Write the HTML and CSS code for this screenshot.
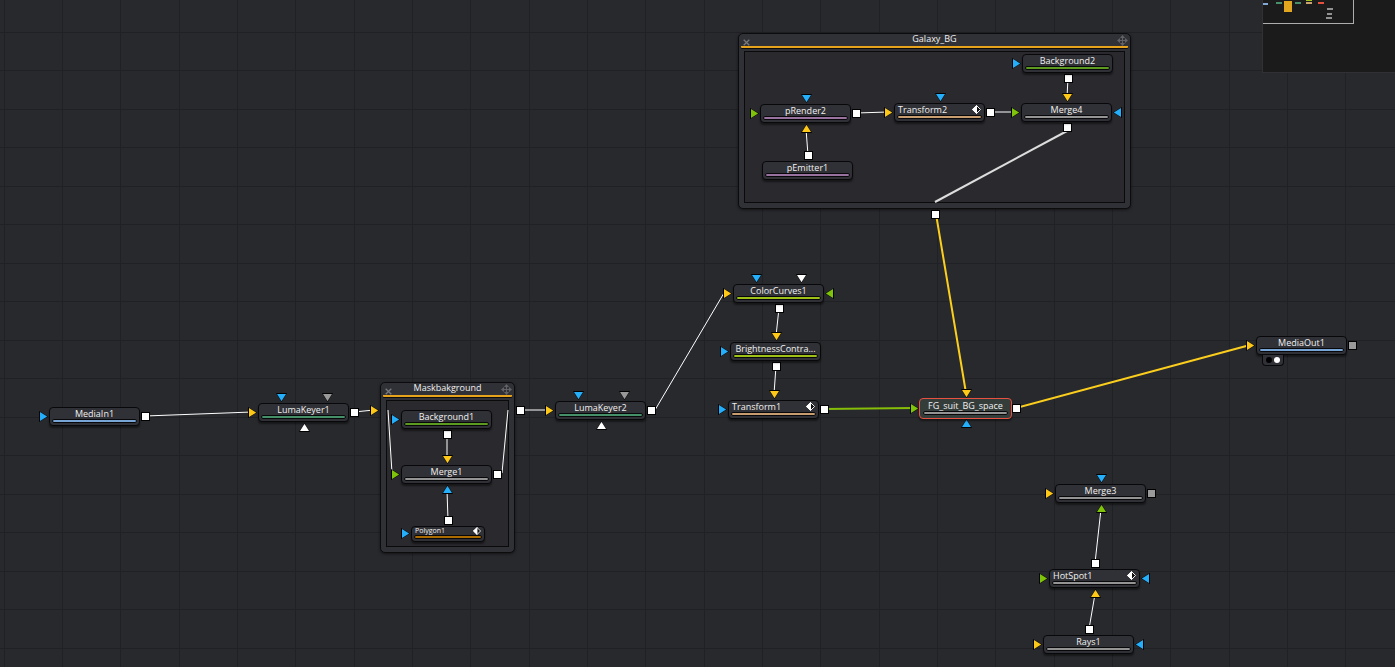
FILE: index.html
```html
<!DOCTYPE html>
<html lang="en">
<head>
<meta charset="utf-8">
<title>Node editor</title>
<link rel="stylesheet" href="styles.css">
</head>
<body>
<main class="canvas">
  <svg class="layer" aria-hidden="true">
    <defs>
      <pattern id="grid" width="175" height="77" patternUnits="userSpaceOnUse">
        <path class="grid-line" d="M4 0h1v77h-1zM62 0h1v77h-1zM120 0h1v77h-1zM0 32h175v1H0zM0 70h175v1H0z"/>
      </pattern>
      <symbol id="out" width="9" height="9" viewBox="0 0 9 9"><rect width="9" height="9" fill="#000"/><rect x="1" y="1" width="7" height="7" fill="currentColor"/></symbol>
      <symbol id="right" width="9" height="11" viewBox="0 0 9 11"><path d="M0 0L9 5.5L0 11Z" fill="#000"/><path d="M1 1L8.200 5.500L1 10Z" fill="currentColor"/></symbol>
      <symbol id="left" width="9" height="11" viewBox="0 0 9 11"><path d="M9 0L0 5.5L9 11Z" fill="#000"/><path d="M8 1L.8 5.500L8 10Z" fill="currentColor"/></symbol>
      <symbol id="down" width="11" height="9" viewBox="0 0 11 9"><path d="M0 0L5.5 9L11 0Z" fill="#000"/><path d="M1 1L5.500 8.200L10 1Z" fill="currentColor"/></symbol>
      <symbol id="up" width="11" height="9" viewBox="0 0 11 9"><path d="M0 9L5.5 0L11 9Z" fill="#000"/><path d="M1 8L5.500 .8L10 8Z" fill="currentColor"/></symbol>
      <symbol id="key" viewBox="0 0 9 9"><path d="M4.500 .5L8.500 4.500L4.500 8.500L.5 4.500Z" fill="#111" stroke="#eee"/><path d="M5 0L0 4.500L5 9Z" fill="#fff"/></symbol>
      <symbol id="close" viewBox="0 0 7 7"><path d="M.7 .7L6.300 6.300M6.300 .7L.7 6.300" fill="none" stroke="#7a7a7c" stroke-width="1.300"/></symbol>
      <symbol id="move" viewBox="0 0 11 11"><path d="M5 1h1v9H5zM1 5h9v1H1z" fill="#626266"/><path d="M5.500 0L8 3H3ZM5.500 11L3 8H8ZM0 5.500L3 3V8ZM11 5.500L8 8V3Z" fill="#626266"/></symbol>
    </defs>
    <rect width="100%" height="100%" fill="url(#grid)"/>
  </svg>

  <section class="group galaxy">
    <header class="group-head">
      <button class="tool" aria-label="Close Galaxy_BG"><svg class="close"><use href="#close"/></svg></button>
      <h2 class="group-name">Galaxy_BG</h2>
      <button class="tool" aria-label="Move Galaxy_BG"><svg class="move"><use href="#move"/></svg></button>
    </header>
    <div class="group-body"></div>
  </section>
  <section class="group mask">
    <header class="group-head">
      <button class="tool" aria-label="Close Maskbakground"><svg class="close"><use href="#close"/></svg></button>
      <h2 class="group-name">Maskbakground</h2>
      <button class="tool" aria-label="Move Maskbakground"><svg class="move"><use href="#move"/></svg></button>
    </header>
    <div class="group-body"></div>
  </section>

  <svg class="layer" aria-hidden="true">
    <g class="wire">
      <path d="M145 416L252 412M354 412L374 410M388 410L392 473M447 434V459M448 520L447 490M502 473L508 410M520 410H549M655 410L724 293M779 308L776 336M776 366L774 394M856 113L888 112M808 155L806 129M990 112H1015M1068 78L1067 97M1095 563L1101 509M1089 629L1095 594"/>
      <path class="wire-wide" d="M1067 131L935 202"/>
    </g>
    <path class="wire-green" d="M824 409L914 408"/>
    <path class="wire-gold" d="M936 214L966 393M1016 408L1250 345"/>
    <g class="white">
      <use href="#out" x="141" y="412"/><use href="#out" x="350" y="408"/><use href="#out" x="647" y="406"/>
      <use href="#out" x="516" y="406"/><use href="#out" x="443" y="430"/><use href="#out" x="493" y="470"/>
      <use href="#out" x="444" y="516"/><use href="#out" x="775" y="304"/><use href="#out" x="772" y="362"/>
      <use href="#out" x="820" y="405"/><use href="#out" x="1012" y="404"/><use href="#out" x="1091" y="559"/>
      <use href="#out" x="1085" y="625"/><use href="#out" x="852" y="109"/><use href="#out" x="804" y="151"/>
      <use href="#out" x="986" y="108"/><use href="#out" x="1064" y="74"/><use href="#out" x="1063" y="123"/>
      <use href="#out" x="931" y="210"/>
      <use href="#down" x="796" y="274"/><use href="#up" x="299" y="423"/><use href="#up" x="596" y="421"/>
    </g>
    <g class="gray">
      <use href="#out" x="1348" y="341"/><use href="#out" x="1147" y="489"/>
      <use href="#down" x="322" y="393"/><use href="#down" x="619" y="391"/>
    </g>
    <g class="blue">
      <use href="#right" x="39" y="411"/><use href="#right" x="391" y="414"/><use href="#right" x="401" y="528"/>
      <use href="#right" x="720" y="346"/><use href="#right" x="718" y="404"/><use href="#right" x="1012" y="58"/>
      <use href="#left" x="1141" y="573"/><use href="#left" x="1135" y="639"/><use href="#left" x="1113" y="107"/>
      <use href="#down" x="801" y="94"/><use href="#down" x="935" y="93"/><use href="#down" x="276" y="393"/>
      <use href="#down" x="573" y="391"/><use href="#down" x="751" y="274"/><use href="#down" x="1096" y="474"/>
      <use href="#up" x="442" y="485"/><use href="#up" x="961" y="419"/>
    </g>
    <g class="gold">
      <use href="#right" x="248" y="407"/><use href="#right" x="370" y="405"/><use href="#right" x="545" y="405"/>
      <use href="#right" x="723" y="288"/><use href="#right" x="1246" y="340"/><use href="#right" x="1045" y="488"/>
      <use href="#right" x="1033" y="639"/><use href="#right" x="884" y="107"/>
      <use href="#down" x="1062" y="93"/><use href="#down" x="442" y="455"/><use href="#down" x="771" y="332"/>
      <use href="#down" x="769" y="390"/><use href="#down" x="961" y="389"/>
      <use href="#up" x="1090" y="589"/><use href="#up" x="801" y="124"/>
    </g>
    <g class="green">
      <use href="#right" x="391" y="469"/><use href="#right" x="910" y="403"/><use href="#right" x="1039" y="573"/>
      <use href="#right" x="750" y="108"/><use href="#right" x="1011" y="107"/>
      <use href="#left" x="825" y="288"/><use href="#up" x="1096" y="504"/>
    </g>
  </svg>

  <article class="node media-in"><div class="name">MediaIn1</div><div class="bar bar-blue"></div></article>
  <article class="node luma-1"><div class="name">LumaKeyer1</div><div class="bar bar-teal"></div></article>
  <article class="node background-1"><div class="name">Background1</div><div class="bar bar-green"></div></article>
  <article class="node merge-1"><div class="name">Merge1</div><div class="bar bar-gray"></div></article>
  <article class="node small polygon-1"><div class="name keyed"><span>Polygon1</span><svg class="key"><use href="#key"/></svg></div><div class="bar bar-brown"></div></article>
  <article class="node luma-2"><div class="name">LumaKeyer2</div><div class="bar bar-teal"></div></article>
  <article class="node curves-1"><div class="name">ColorCurves1</div><div class="bar bar-lime"></div></article>
  <article class="node brightness-1"><div class="name">BrightnessContra...</div><div class="bar bar-lime"></div></article>
  <article class="node transform-1"><div class="name keyed"><span>Transform1</span><svg class="key"><use href="#key"/></svg></div><div class="bar bar-tan"></div></article>
  <article class="node selected fg-suit"><div class="name">FG_suit_BG_space</div><div class="bar bar-gray"></div></article>
  <article class="node media-out"><div class="name">MediaOut1</div><div class="bar bar-blue"></div></article>
  <div class="views"><button class="view" aria-label="Left viewer"></button><button class="view view-on" aria-label="Right viewer"></button></div>
  <article class="node merge-3"><div class="name">Merge3</div><div class="bar bar-gray"></div></article>
  <article class="node hotspot-1"><div class="name keyed"><span>HotSpot1</span><svg class="key"><use href="#key"/></svg></div><div class="bar bar-gray"></div></article>
  <article class="node rays-1"><div class="name">Rays1</div><div class="bar bar-gray"></div></article>
  <article class="node render-2"><div class="name">pRender2</div><div class="bar bar-purple"></div></article>
  <article class="node emitter-1"><div class="name">pEmitter1</div><div class="bar bar-purple"></div></article>
  <article class="node transform-2"><div class="name keyed"><span>Transform2</span><svg class="key"><use href="#key"/></svg></div><div class="bar bar-tan"></div></article>
  <article class="node merge-4"><div class="name">Merge4</div><div class="bar bar-gray"></div></article>
  <article class="node background-2"><div class="name">Background2</div><div class="bar bar-green"></div></article>

  <aside class="minimap" aria-label="Navigator">
    <svg class="map" aria-hidden="true">
      <path fill="#7fa9d3" d="M0 3h5v2H0z"/>
      <path fill="#47906a" d="M13 2h6v2h-6zM32 2h6v2h-6z"/>
      <path fill="#e2a61f" d="M21 1h8v11h-8z"/>
      <path fill="#9cc41a" d="M43 0h6v1h-6z"/>
      <path fill="#caa36f" d="M43 2h6v2h-6z"/>
      <path fill="#e5503c" d="M55 2h6v2h-6z"/>
      <path fill="#929292" d="M64 8h6v2h-6zM64 13h5v2h-5zM63 17h6v2h-6z"/>
      <path fill="#adadad" d="M0 23h91v1H0zM90 0h1v24h-1z"/>
    </svg>
  </aside>
</main>
</body>
</html>
```
FILE: styles.css
```css
* { box-sizing: border-box; }

body {
  margin: 0;
  background: #28292d;
  color: #f0f0f0;
  font: 9px/11px "Open Sans", "Noto Sans", sans-serif;
}

.canvas {
  position: relative;
  min-height: 100vh;
  overflow: hidden;
}

.layer {
  position: absolute;
  inset: 0;
  width: 100%;
  height: 100%;
}

.grid-line { fill: #202124; }

/* Wires and ports */
.wire { fill: none; stroke: #fff; }
.wire-wide { stroke: #ddd; stroke-width: 2; }
.wire-green { stroke: #86bd08; stroke-width: 2; }
.wire-gold { fill: none; stroke: #fbce1e; stroke-width: 2; }
.white { color: #fff; }
.gray { color: #999; }
.blue { color: #25aefa; }
.gold { color: #fdc818; }
.green { color: #7fc30a; }

/* Groups */
.group {
  position: absolute;
  display: flex;
  flex-direction: column;
  padding: 0 5px 5px;
  border: 1px solid #0c0c0d;
  border-radius: 5px;
  background: #303136;
  box-shadow: 0 1px 3px #0008;
}

.group-head {
  display: flex;
  justify-content: space-between;
  height: 14px;
  margin: 0 -3px 3px;
  border-bottom: 2px solid #e6a31b;
  border-radius: 1px;
  box-shadow: 0 1px 0 #0c0c0d;
}

.group-name {
  margin: 0;
  font-size: 9px;
  font-weight: 400;
  line-height: 9px;
}

.group-body {
  flex: 1;
  border: 1px solid #0a0a0b;
  background: #29282ddd;
}

.tool {
  display: flex;
  justify-content: center;
  align-items: flex-end;
  width: 11px;
  padding: 0;
  border: 0;
  background: none;
}

.close { width: 7px; height: 7px; }
.move { width: 11px; height: 11px; }

.galaxy { left: 738px; top: 33px; width: 393px; height: 176px; }
.mask { left: 380px; top: 382px; width: 135px; height: 171px; }

/* Nodes */
.node {
  position: absolute;
  width: 91px;
  padding: 0 2px 2px;
  border: 1px solid #08080a;
  border-radius: 4px;
  background: #303136;
  box-shadow: 0 2px 2px #0007;
}

.name {
  height: 11px;
  text-align: center;
  white-space: nowrap;
}

.keyed {
  display: flex;
  justify-content: space-between;
  align-items: center;
  padding: 0 1px;
}

.key { width: 9px; height: 9px; }

.bar {
  height: 4px;
  border: 1px solid #08080a;
  border-radius: 2px;
}

.small { width: 74px; font-size: 7px; line-height: 10px; }
.small .name { height: 8px; }
.small .key { width: 8px; height: 8px; }

.selected {
  width: 93px;
  padding: 1px 3px 3px;
  border-color: #e8503f;
  background: #353d3b;
}

.bar-blue { background: #76a5d6; }
.bar-teal { background: #459068; }
.bar-green { background: #5c9a20; }
.bar-gray { background: #949494; }
.bar-brown { background: #ab6b00; }
.bar-lime { background: #9fc117; }
.bar-tan { background: #c89e70; }
.bar-purple { background: #9a729f; }

.media-in { left: 49px; top: 407px; }
.luma-1 { left: 258px; top: 403px; }
.background-1 { left: 401px; top: 410px; }
.merge-1 { left: 401px; top: 465px; }
.polygon-1 { left: 411px; top: 526px; }
.luma-2 { left: 555px; top: 401px; }
.curves-1 { left: 733px; top: 284px; }
.brightness-1 { left: 730px; top: 342px; }
.transform-1 { left: 728px; top: 400px; }
.fg-suit { left: 919px; top: 398px; }
.media-out { left: 1256px; top: 336px; }
.merge-3 { left: 1055px; top: 484px; }
.hotspot-1 { left: 1049px; top: 569px; }
.rays-1 { left: 1043px; top: 635px; }
.render-2 { left: 760px; top: 104px; }
.emitter-1 { left: 762px; top: 161px; }
.transform-2 { left: 894px; top: 103px; }
.merge-4 { left: 1021px; top: 103px; }
.background-2 { left: 1022px; top: 54px; }

.views {
  position: absolute;
  left: 1262px;
  top: 355px;
  display: flex;
  justify-content: center;
  align-items: center;
  gap: 2px;
  width: 22px;
  height: 11px;
  border: 1px solid #08080a;
  border-top: 0;
  border-radius: 0 0 4px 4px;
  background: #303136;
}

.view {
  width: 6px;
  height: 6px;
  padding: 0;
  border: 0;
  border-radius: 50%;
  background: #000;
}

.view-on { background: #fff; }

/* Navigator */
.minimap {
  position: absolute;
  top: 0;
  right: 0;
  width: 133px;
  height: 73px;
  border: 1px solid #303035;
  border-width: 0 0 1px 1px;
  background: #1b1b1b;
}

.map { display: block; width: 100%; height: 100%; }
```
